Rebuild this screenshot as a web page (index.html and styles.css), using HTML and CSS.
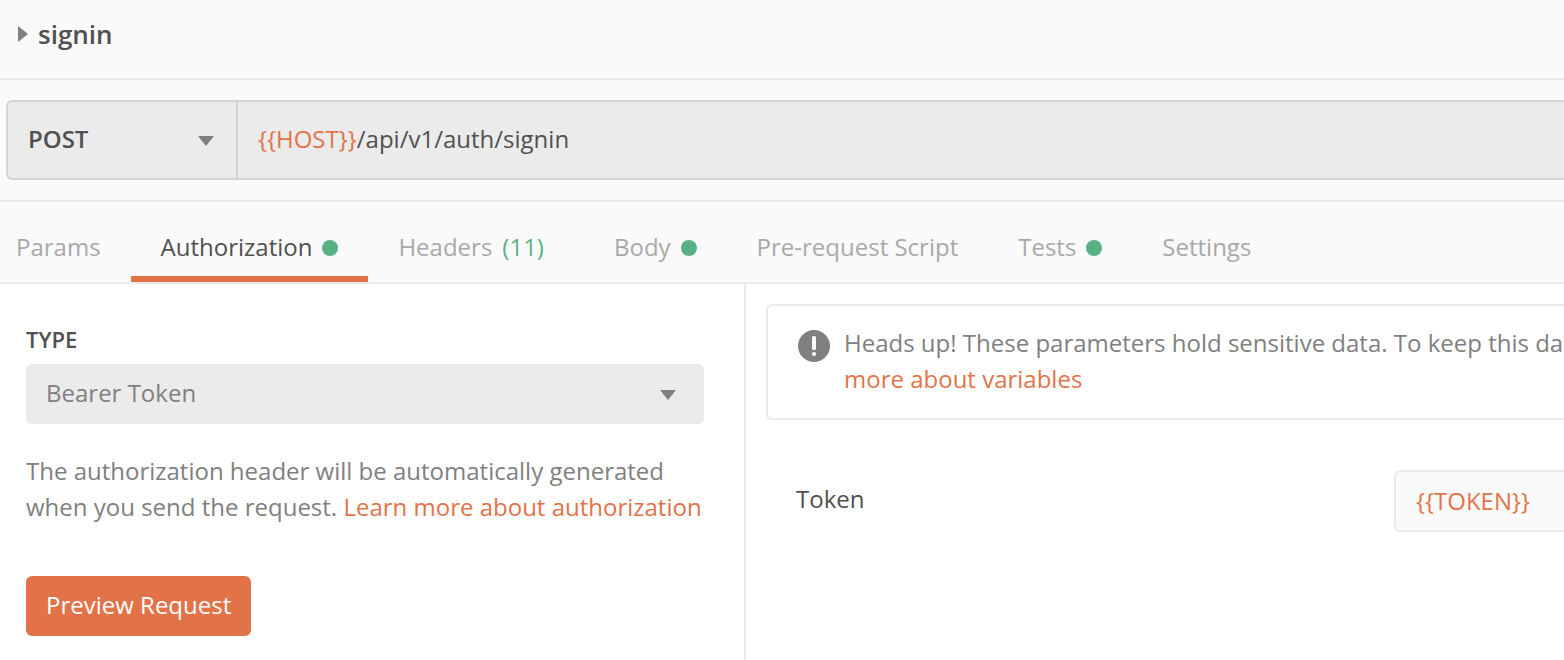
FILE: index.html
```html
<!DOCTYPE html>
<html lang="en">
<head>
<meta charset="utf-8">
<title>signin</title>
<link rel="stylesheet" href="styles.css">
</head>
<body>
<header class="request-header">
  <button class="request-toggle" type="button" aria-expanded="false">
    <svg class="icon-expand" width="10" height="16" viewBox="0 0 10 16" aria-hidden="true"><path d="M0 0L10 8L0 16Z"/></svg>
    <span>signin</span>
  </button>
</header>

<section class="url-section">
  <div class="url-bar">
    <div class="select-wrap method">
      <select class="select method-select" aria-label="Method">
        <option>POST</option>
      </select>
      <svg class="caret" width="16" height="10" viewBox="0 0 16 10" aria-hidden="true"><path d="M0 0H16L8 10Z"/></svg>
    </div>
    <div class="url-field">
      <label class="variable" for="url">{{HOST}}</label>
      <input class="url-input" id="url" type="text" value="/api/v1/auth/signin">
    </div>
  </div>
</section>

<nav class="tabs" role="tablist">
  <button class="tab" type="button" role="tab">Params</button>
  <button class="tab active" type="button" role="tab" aria-selected="true">Authorization<span class="dot"></span></button>
  <button class="tab" type="button" role="tab">Headers<span class="count">(11)</span></button>
  <button class="tab" type="button" role="tab">Body<span class="dot"></span></button>
  <button class="tab" type="button" role="tab">Pre-request Script</button>
  <button class="tab" type="button" role="tab">Tests<span class="dot"></span></button>
  <button class="tab" type="button" role="tab">Settings</button>
</nav>

<main class="panels">
  <section class="auth-type">
    <label class="type-label" for="type">TYPE</label>
    <div class="select-wrap type">
      <select class="select type-select" id="type">
        <option>Bearer Token</option>
      </select>
      <svg class="caret" width="16" height="10" viewBox="0 0 16 10" aria-hidden="true"><path d="M0 0H16L8 10Z"/></svg>
    </div>
    <p class="description">The authorization header will be automatically generated<br>when you send the request. <a class="link" href="#">Learn more about authorization</a></p>
    <button class="preview" type="button">Preview Request</button>
  </section>

  <section class="auth-details">
    <div class="notice">
      <svg class="notice-icon" width="32" height="32" viewBox="0 0 32 32" aria-hidden="true"><circle cx="16" cy="16" r="16" fill="#808080"/><rect x="14" y="6" width="4" height="14" rx="1.5" fill="#fff"/><circle cx="16" cy="24" r="2.1" fill="#fff"/></svg>
      <p class="notice-text">Heads up! These parameters hold sensitive data. To keep this da<br><a class="link" href="#">more about variables</a></p>
    </div>
    <div class="token-row">
      <label class="token-label" for="token">Token</label>
      <input class="token-input" id="token" type="text" value="{{TOKEN}}">
    </div>
  </section>
</main>
</body>
</html>
```
FILE: styles.css
```css
* {
  box-sizing: border-box;
}

body {
  margin: 0;
  min-height: 100vh;
  display: flex;
  flex-direction: column;
  overflow-x: hidden;
  background: #fff;
  color: #505050;
  font-family: "Open Sans", sans-serif;
  font-size: 24px;
  line-height: 36px;
}

button,
input,
select {
  margin: 0;
  padding: 0;
  border: 0;
  background: none;
  color: inherit;
  font: inherit;
}

p {
  margin: 0;
}

.link {
  color: #e27349;
  text-decoration: none;
}

.request-header {
  padding: 16px 18px 26px;
  border-bottom: 2px solid #eaeaea;
  background: #fafafa;
}

.request-toggle {
  display: flex;
  align-items: center;
  gap: 10px;
  font-size: 26px;
  font-weight: 600;
}

.icon-expand,
.caret {
  fill: #808080;
}

.url-section {
  padding: 20px 0 20px 6px;
  border-bottom: 2px solid #eaeaea;
  background: #fafafa;
}

.url-bar {
  display: flex;
  height: 80px;
  border: 2px solid #d4d4d4;
  border-right: 0;
  border-radius: 6px 0 0 6px;
  background: #ebebeb;
}

.select-wrap {
  display: grid;
  align-items: center;
}

.select-wrap > * {
  grid-area: 1 / 1;
}

.select {
  width: 100%;
  height: 100%;
  padding: 0 20px 2px;
  appearance: none;
}

.caret {
  justify-self: end;
  margin-top: 2px;
  pointer-events: none;
}

.method {
  width: 230px;
  border-right: 2px solid #d4d4d4;
}

.method .caret {
  margin-right: 22px;
}

.method-select {
  font-weight: 600;
}

.url-field {
  flex: 1;
  display: flex;
  align-items: center;
  padding: 0 0 2px 20px;
}

.variable {
  color: #e27349;
}

.url-input {
  flex: 1;
  min-width: 0;
}

.tabs {
  display: flex;
  padding-top: 10px;
  border-bottom: 2px solid #eaeaea;
  background: #fafafa;
}

.tab {
  display: flex;
  align-items: center;
  gap: 10px;
  height: 70px;
  padding: 6px 30px 0;
  border-bottom: 6px solid transparent;
  color: #a9a9a9;
  white-space: nowrap;
}

.tab:first-child {
  padding-left: 16px;
}

.tab.active {
  border-bottom-color: #e27349;
  color: #505050;
}

.dot {
  width: 16px;
  height: 16px;
  margin-top: 2px;
  border-radius: 50%;
  background: #59b083;
}

.count {
  margin-right: 10px;
  color: #59b083;
}

.panels {
  flex: 1;
  display: flex;
}

.auth-type {
  flex: none;
  width: 746px;
  padding: 37px 40px 24px 26px;
  border-right: 2px solid #eaeaea;
}

.type-label {
  display: block;
  font-size: 22px;
  font-weight: 600;
}

.type {
  height: 60px;
  margin: 7px 0 29px;
  border-radius: 6px;
  background: #ebebeb;
  color: #808080;
}

.type .caret {
  margin-right: 28px;
}

.description {
  color: #808080;
  white-space: nowrap;
}

.preview {
  height: 60px;
  margin-top: 51px;
  padding: 0 20px 2px;
  border-radius: 6px;
  background: #e27349;
  color: #fff;
}

.auth-details {
  flex: 1;
  min-width: 0;
  padding: 20px 0 0 20px;
}

.notice {
  display: flex;
  gap: 14px;
  padding: 19px 0 21px 30px;
  border: 2px solid #eaeaea;
  border-right: 0;
  border-radius: 6px 0 0 6px;
}

.notice-icon {
  flex: none;
  margin-top: 5px;
}

.notice-text {
  color: #808080;
  white-space: nowrap;
}

.token-row {
  display: flex;
  align-items: center;
  margin-top: 50px;
  padding-left: 30px;
}

.token-label {
  flex: 1;
  padding-bottom: 4px;
}

.token-input {
  width: 170px;
  height: 62px;
  padding: 0 0 2px 20px;
  border: 2px solid #eaeaea;
  border-right: 0;
  border-radius: 6px 0 0 6px;
  background: #fafafa;
  color: #e27349;
}
```
